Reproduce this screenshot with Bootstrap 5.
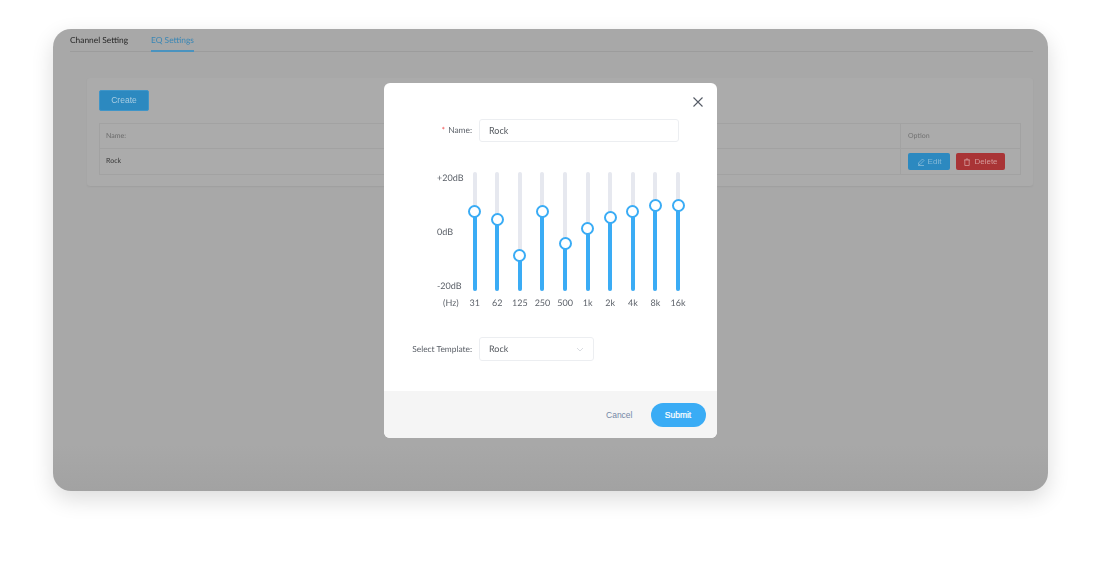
<!DOCTYPE html>
<html lang="en">
<head>
<meta charset="utf-8">
<title>EQ Settings</title>
<link href="https://cdn.jsdelivr.net/npm/bootstrap@5.3.0/dist/css/bootstrap.min.css" rel="stylesheet">
<style>
html,body{height:100%;background:#fff;overflow:hidden}
body{font-family:"Lato","Liberation Sans",sans-serif;color:#5f6670;text-rendering:geometricPrecision}
.appwin{position:relative;margin:29px 52px 0 53px;height:462px;border-radius:18px;background:linear-gradient(to bottom,#a8a8a8 0,#a8a8a8 90%,#a2a2a2 100%);box-shadow:0 8px 22px rgba(0,0,0,.14);padding:0 15px 0 17px;filter:blur(.35px)}
.tabbar{height:23px;border-bottom:1px solid #9c9c9c;gap:23px;font-size:8.4px}
.tabitem{height:23px;padding-top:5px;color:#262626;line-height:12px}
.tabitem.on{color:#3a87b5;border-bottom:2px solid #4a93bf}
.panelbox{margin:26px 0 0 17px;height:108px;background:#ababab;border-radius:3px;padding:12px;box-shadow:0 1px 2px rgba(0,0,0,.06)}
.makebtn{width:50px;height:21px;background:#2c89c0;border:1px solid #3f95c8;border-radius:2px;color:#a9cde2;font:8.5px/19px "Liberation Sans",sans-serif;padding:0}
.gridtbl{margin-top:12px;border:1px solid #a2a2a2;height:52px;font-size:7px}
.gridrow{height:25px;border-bottom:1px solid #a2a2a2}
.gridrow:last-child{border-bottom:0;height:25px}
.cellmain{flex:1;padding:0 6px;display:flex;align-items:center;color:#6a6a6a}
.cellmain.data{color:#383838}
.cellopt{width:120px;border-left:1px solid #a2a2a2;padding:0 7px;display:flex;align-items:center;gap:6px;color:#717171}
.rowbtn{height:17px;border-radius:2px;border:0;padding:0;font:8px/17px "Liberation Sans",sans-serif;display:flex;align-items:center;justify-content:center;gap:3px}
.rowbtn.edit{width:42px;background:#2c89c0;color:#86bad8}
.rowbtn.del{width:49px;background:#a93436;color:#d49a9a}
.dlg{position:absolute;left:331px;top:54px;width:333px;height:355px;background:#fff;border-radius:6px;overflow:hidden;display:flex;flex-direction:column}
.dlgbody{position:relative;flex:1;padding-top:36px}
.closex{position:absolute;right:13px;top:13px;width:12px;height:12px;padding:0;border:0;background:none;display:flex}
.field{display:flex;align-items:center;font-size:8.4px}
.fieldlabel{width:88px;text-align:right;margin-right:7px;color:#5c6169;white-space:nowrap}
.req{color:#ef4444;margin-right:3px}
.txtbox{width:200px;height:23px;border:1px solid #eceef1;border-radius:3px;padding:0 9px;font:9px "Lato",sans-serif;color:#55595f;background:#fff;outline:0}
.pickbox{width:115px;height:24px;border:1px solid #eceef1;border-radius:3px;padding:0 9px;display:flex;align-items:center;justify-content:space-between;color:#55595f;font-size:9px}
.eqarea{margin:30px 0 0 53px;display:flex}
.axis{width:26.4px;height:120px;display:flex;flex-direction:column;justify-content:space-between;font-size:9px;line-height:12px;color:#5c6169;white-space:nowrap}
.bands{display:flex}
.bandcol{width:22.6px;display:flex;flex-direction:column;align-items:center}
.rail{position:relative;width:4px;height:119px;background:#e6e8ef;border-radius:2px}
.railfill{position:absolute;left:0;right:0;bottom:0;background:#3aacf5;border-radius:0 0 2px 2px}
.knob{position:absolute;left:50%;width:13px;height:13px;margin:-6.5px 0 0 -6.5px;border:2px solid #3aacf5;border-radius:50%;background:#fff}
.freqrow{margin:0 0 0 53px;display:flex;font-size:9px;line-height:12px;color:#5c6169;padding-top:5px}
.hzlabel{width:26.4px;padding-left:6px}
.freqcell{width:22.6px;text-align:center;white-space:nowrap}
.tplfield{margin-top:28px}
.dlgfoot{height:47px;background:#f5f5f5;display:flex;align-items:center;justify-content:flex-end;padding-right:11.5px;gap:18px}
.cancelbtn{border:0;background:none;padding:0;font:8.5px "Liberation Sans",sans-serif;color:#7488a6}
.submitbtn{width:55px;height:24px;border:0;padding:0;border-radius:12px;background:#3aacf5;color:#fff;font:8.5px "Liberation Sans",sans-serif;-webkit-text-stroke:.2px #fff}
</style>
</head>
<body>
<div class="appwin">
  <div class="tabbar d-flex">
    <div class="tabitem">Channel Setting</div>
    <div class="tabitem on">EQ Settings</div>
  </div>
  <div class="panelbox">
    <button class="makebtn d-block" type="button">Create</button>
    <div class="gridtbl">
      <div class="gridrow d-flex"><div class="cellmain">Name:</div><div class="cellopt">Option</div></div>
      <div class="gridrow d-flex"><div class="cellmain data">Rock</div><div class="cellopt">
        <button class="rowbtn edit" type="button"><svg width="8" height="8" viewBox="0 0 8 8" fill="none" stroke="#86bad8" stroke-width=".8"><path d="M5.5 1 7 2.5 3 6.5H1.5V5zM1 7.5h6"/></svg>Edit</button>
        <button class="rowbtn del" type="button"><svg width="8" height="8" viewBox="0 0 8 8" fill="none" stroke="#d49a9a" stroke-width=".8"><path d="M1 2h6M3 2V1h2v1M1.8 2v5.5h4.4V2"/></svg>Delete</button>
      </div></div>
    </div>
  </div>
  <div class="dlg">
    <div class="dlgbody">
      <button class="closex" type="button" aria-label="Close"><svg width="12" height="12" viewBox="0 0 12 12" fill="none" stroke="#555b66" stroke-width="1.1"><path d="M1.5 1.5l9 9M10.5 1.5l-9 9"/></svg></button>
      <div class="field"><div class="fieldlabel"><span class="req">*</span>Name:</div><input class="txtbox" value="Rock"></div>
      <div class="eqarea">
        <div class="axis"><span>+20dB</span><span>0dB</span><span>-20dB</span></div>
        <div class="bands">
          <div class="bandcol"><div class="rail"><div class="railfill" style="height:80px"></div><div class="knob" style="top:39px"></div></div></div>
          <div class="bandcol"><div class="rail"><div class="railfill" style="height:71.5px"></div><div class="knob" style="top:47.5px"></div></div></div>
          <div class="bandcol"><div class="rail"><div class="railfill" style="height:35.5px"></div><div class="knob" style="top:83.5px"></div></div></div>
          <div class="bandcol"><div class="rail"><div class="railfill" style="height:80px"></div><div class="knob" style="top:39px"></div></div></div>
          <div class="bandcol"><div class="rail"><div class="railfill" style="height:47.5px"></div><div class="knob" style="top:71.5px"></div></div></div>
          <div class="bandcol"><div class="rail"><div class="railfill" style="height:62.5px"></div><div class="knob" style="top:56.5px"></div></div></div>
          <div class="bandcol"><div class="rail"><div class="railfill" style="height:74px"></div><div class="knob" style="top:45px"></div></div></div>
          <div class="bandcol"><div class="rail"><div class="railfill" style="height:80px"></div><div class="knob" style="top:39px"></div></div></div>
          <div class="bandcol"><div class="rail"><div class="railfill" style="height:86px"></div><div class="knob" style="top:33px"></div></div></div>
          <div class="bandcol"><div class="rail"><div class="railfill" style="height:86px"></div><div class="knob" style="top:33px"></div></div></div>
        </div>
      </div>
      <div class="freqrow"><div class="hzlabel">(Hz)</div><div class="freqcell">31</div><div class="freqcell">62</div><div class="freqcell">125</div><div class="freqcell">250</div><div class="freqcell">500</div><div class="freqcell">1k</div><div class="freqcell">2k</div><div class="freqcell">4k</div><div class="freqcell">8k</div><div class="freqcell">16k</div></div>
      <div class="field tplfield"><div class="fieldlabel">Select Template:</div><div class="pickbox"><span>Rock</span><svg width="8" height="5" viewBox="0 0 8 5" fill="none" stroke="#cfd3d9" stroke-width=".8"><path d="M1 1l3 3 3-3"/></svg></div></div>
    </div>
    <div class="dlgfoot"><button class="cancelbtn" type="button">Cancel</button><button class="submitbtn" type="button">Submit</button></div>
  </div>
</div>
<script src="https://cdn.jsdelivr.net/npm/bootstrap@5.3.0/dist/js/bootstrap.bundle.min.js"></script>
</body>
</html>
